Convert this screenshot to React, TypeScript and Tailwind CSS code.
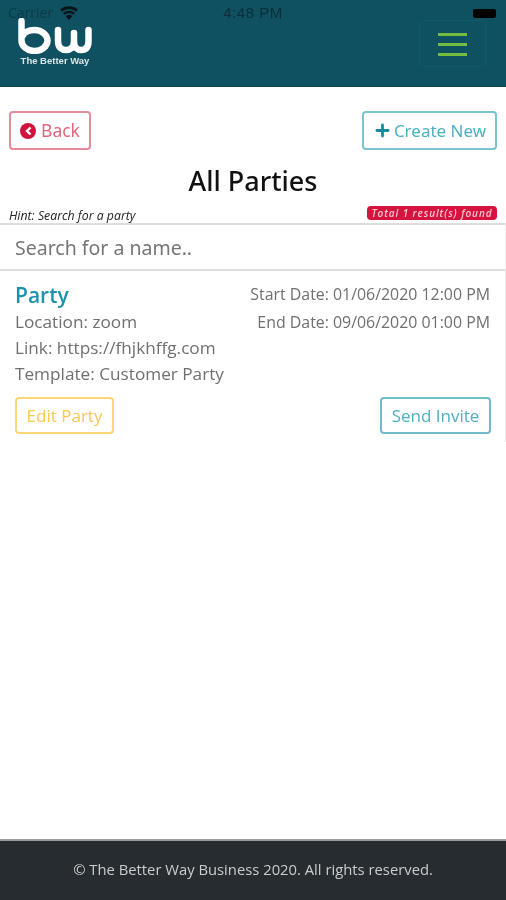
import { Plus } from "lucide-react";

function Logo() {
  return (
    <div className="flex flex-col items-center w-[74px]">
      <svg width="74" height="36" viewBox="0 0 74 36" fill="none" stroke="#ffffff" strokeWidth="6.5" strokeLinecap="round">
        <path d="M3.5 3V22A13 10.5 0 1 0 16.5 12C11 12 6.5 14 4.5 18" />
        <path d="M40 12V23C40 30 44 32 48 32C52 32 56 30 56 23V15M56 23C56 30 60 32 63 32C67 32 70.5 30 70.5 23V12" />
      </svg>
      <span className="text-[9.5px] leading-[11px] mt-[1px] font-bold text-[#d9e6e9] whitespace-nowrap font-['Liberation_Sans',sans-serif]">
        The Better Way
      </span>
    </div>
  );
}

function WifiIcon() {
  return (
    <svg width="20" height="14" viewBox="0 0 20 14" fill="#06141a">
      <path d="M10 14 6.8 10.2A5 5 0 0 1 13.2 10.2Z" />
      <path d="M5.6 8.8 4 7A9 9 0 0 1 16 7L14.4 8.8A7 7 0 0 0 5.6 8.8Z" />
      <path d="M2.9 5.6 1.2 3.6A13.5 13.5 0 0 1 18.8 3.6L17.1 5.6A11 11 0 0 0 2.9 5.6Z" />
    </svg>
  );
}

export default function App() {
  return (
    <div className="flex flex-col h-[900px] bg-white font-['Open_Sans',sans-serif] blur-[0.6px] overflow-hidden">
      <header className="relative h-[87px] shrink-0 bg-[#0f5160] flex items-start justify-between pl-[18px] pr-[20px] pt-[18px] border-b border-[#0d4856]">
        <div className="absolute top-[4px] left-0 right-0 px-[8px] flex items-center justify-between text-[14px] leading-[18px]">
          <div className="flex items-center gap-[6px] w-[90px]">
            <span className="text-[#0a3a46]">Carrier</span>
            <WifiIcon />
          </div>
          <span className="font-['Liberation_Sans',sans-serif] text-[15px] tracking-[0.5px] text-[#0a2f39]">4:48 PM</span>
          <div className="w-[90px] flex justify-end pr-[2px]">
            <div className="w-[23px] h-[9px] rounded-[2px] bg-black" />
          </div>
        </div>
        <Logo />
        <button className="w-[67px] h-[47px] mt-[2px] pt-[1px] rounded-[5px] border border-[#135a69] flex flex-col items-center justify-center gap-[7px]">
          <span className="block w-[29px] h-[3px] bg-[#72bd40]" />
          <span className="block w-[29px] h-[3px] bg-[#72bd40]" />
          <span className="block w-[29px] h-[3px] bg-[#72bd40]" />
        </button>
      </header>

      <main className="flex-1 flex flex-col">
        <div className="flex justify-between items-start px-[9px] pt-[24px]">
          <button className="h-[39px] w-[82px] rounded-[4px] border-2 border-[#e98a9a] flex items-center justify-center gap-[5px] text-[#e0667c] text-[17.5px] font-['Noto_Sans',sans-serif]">
            <span className="w-[16px] h-[16px] rounded-full bg-[#d2123c] flex items-center justify-center">
              <svg width="9" height="10" viewBox="0 0 9 10" fill="none" stroke="#ffffff" strokeWidth="2.4">
                <path d="M6.5 1.5 3 5l3.5 3.5" />
              </svg>
            </span>
            Back
          </button>
          <button className="h-[39px] w-[135px] rounded-[4px] border-2 border-[#7cc4d2] flex items-center justify-center gap-[2px] text-[#4fb0c2] text-[17px] font-['Noto_Sans',sans-serif]">
            <Plus className="w-[19px] h-[19px] text-[#17899f]" strokeWidth={3.5} />
            Create New
          </button>
        </div>

        <h1 className="text-center text-[27px] leading-[36px] mt-[13px] font-medium text-[#111111] font-['Noto_Sans',sans-serif]">
          All Parties
        </h1>

        <div className="flex justify-between items-start px-[9px] mt-[7px] h-[15px]">
          <span className="italic text-[12.3px] leading-[15px] mt-[2px] text-[#222222]">Hint: Search for a party</span>
          <span className="h-[14px] w-[130px] rounded-[4px] bg-[#d6123e] text-[#f6c6d0] italic font-semibold text-[10px] leading-[14px] text-center tracking-[0.9px] whitespace-nowrap">
            Total 1 result(s) found
          </span>
        </div>

        <div className="h-[48px] mt-[2px] pt-[1px] border-y-2 border-[#dedede] border-r border-r-[#efefef] pl-[15px] flex items-center text-[19.5px] text-[#767676] font-['Noto_Sans',sans-serif]">
          Search for a name..
        </div>

        <section className="h-[171px] border-r border-[#e8e8e8] px-[15px] pt-[9px]">
          <div className="flex justify-between items-start">
            <div className="text-[17.2px] leading-[26px] text-[#6f6f6f]">
              <h2 className="text-[21px] leading-[28px] mt-[1px] font-semibold text-[#1c93ab]">Party</h2>
              <p>Location: zoom</p>
              <p>Link: https://fhjkhffg.com</p>
              <p>Template: Customer Party</p>
            </div>
            <div className="text-[15.9px] leading-[28px] text-[#6f6f6f] text-right">
              <p>Start Date: 01/06/2020 12:00 PM</p>
              <p>End Date: 09/06/2020 01:00 PM</p>
            </div>
          </div>
          <div className="flex justify-between mt-[10px] -mr-[1px]">
            <button className="w-[99px] h-[37px] rounded-[4px] border-2 border-[#fbd679] text-[#fac74f] text-[17px]">
              Edit Party
            </button>
            <button className="w-[111px] h-[37px] rounded-[4px] border-2 border-[#70bccb] text-[#4fb0c2] text-[17px]">
              Send Invite
            </button>
          </div>
        </section>
      </main>

      <footer className="h-[61px] shrink-0 pb-[2px] bg-[#272c31] border-t-2 border-[#9a9c9e] flex items-center justify-center text-[14.8px] text-[#c9cbcd]">
        © The Better Way Business 2020. All rights reserved.
      </footer>
    </div>
  );
}
